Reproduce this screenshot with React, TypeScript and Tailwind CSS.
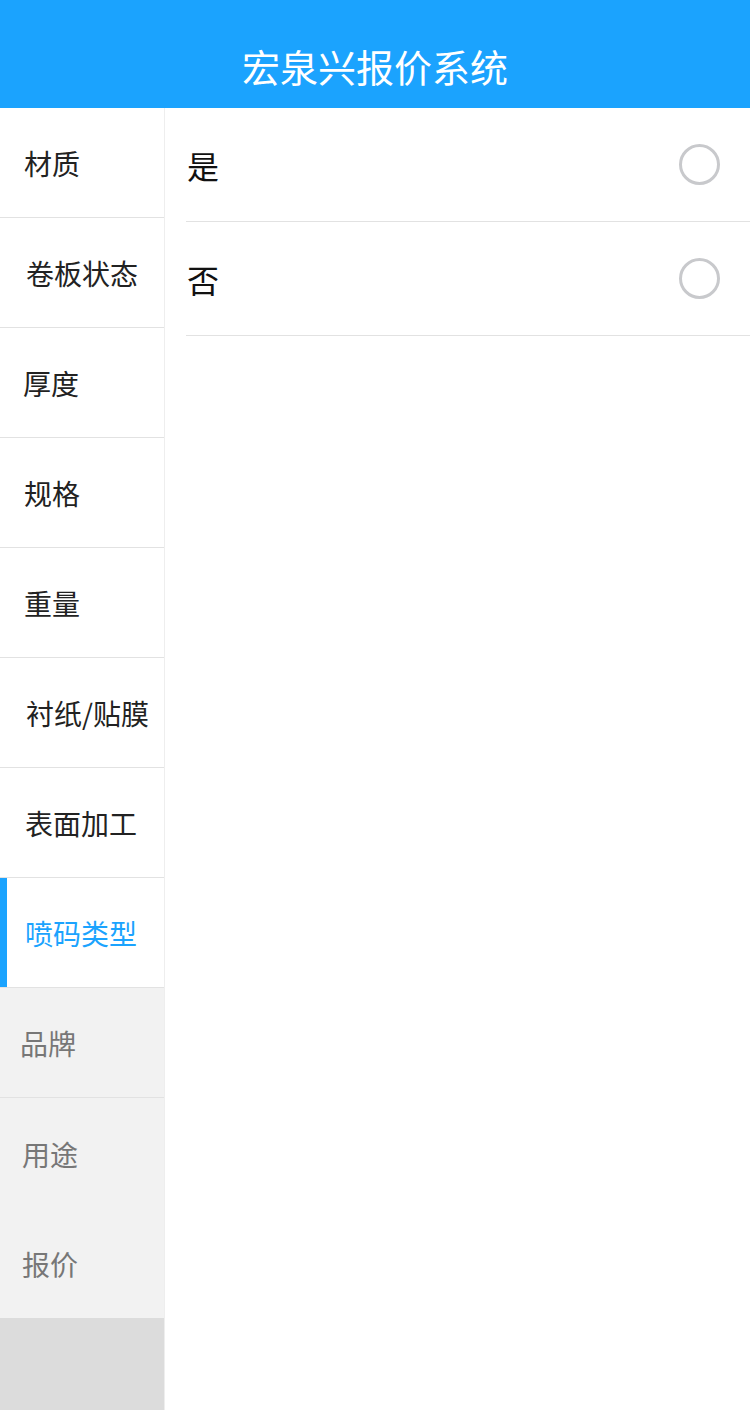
const menu = [
  { label: "材质", pad: "pl-[24px]" },
  { label: "卷板状态", pad: "pl-[26px]" },
  { label: "厚度", pad: "pl-[23px]" },
  { label: "规格", pad: "pl-[24px]" },
  { label: "重量", pad: "pl-[24px]" },
  { label: "衬纸/贴膜", pad: "pl-[26px]" },
  { label: "表面加工", pad: "pl-[25px]" },
];

const options = ["是", "否"];

export default function App() {
  return (
    <div
      className="w-[750px] h-[1410px] bg-white flex flex-col overflow-hidden"
      style={{ fontFamily: '"Noto Sans CJK SC", "Noto Sans", sans-serif' }}
    >
      <header className="h-[108px] bg-[#1ba3fe] flex items-end justify-center pb-[18px] shrink-0">
        <h1 className="text-[38px] leading-[48px] text-white">宏泉兴报价系统</h1>
      </header>

      <div className="flex flex-1">
        <aside className="w-[165px] border-r border-[#eeeeee] flex flex-col shrink-0">
          {menu.map((m) => (
            <div
              key={m.label}
              className={`h-[110px] border-b border-[#e2e2e2] flex items-center pt-[1px] ${m.pad} text-[28px] text-[#222]`}
            >
              {m.label}
            </div>
          ))}
          <div className="h-[110px] border-b border-[#e2e2e2] flex items-stretch">
            <div className="w-[7px] bg-[#1ba3fe]" />
            <div className="flex items-center pt-[1px] pl-[18px] text-[28px] text-[#1ba3fe]">喷码类型</div>
          </div>
          <div className="h-[110px] border-b border-[#e2e2e2] bg-[#f2f2f2] flex items-center pt-[1px] pl-[20px] text-[28px] text-[#777]">
            品牌
          </div>
          <div className="h-[110px] bg-[#f2f2f2] flex items-center pt-[1px] pl-[22px] text-[28px] text-[#777]">
            用途
          </div>
          <div className="h-[110px] bg-[#f2f2f2] flex items-center pt-[1px] pl-[22px] text-[28px] text-[#777]">
            报价
          </div>
          <div className="flex-1 bg-[#dcdcdc]" />
        </aside>

        <main className="flex-1 pl-[21px]">
          {options.map((o) => (
            <div
              key={o}
              className="h-[114px] border-b border-[#e2e2e2] flex items-center justify-between pr-[30px]"
            >
              <span className="text-[32px] text-[#111] pl-[1px]">{o}</span>
              <span className="w-[41px] h-[41px] rounded-full border-[3px] border-[#c8c9cc]" />
            </div>
          ))}
        </main>
      </div>
    </div>
  );
}
